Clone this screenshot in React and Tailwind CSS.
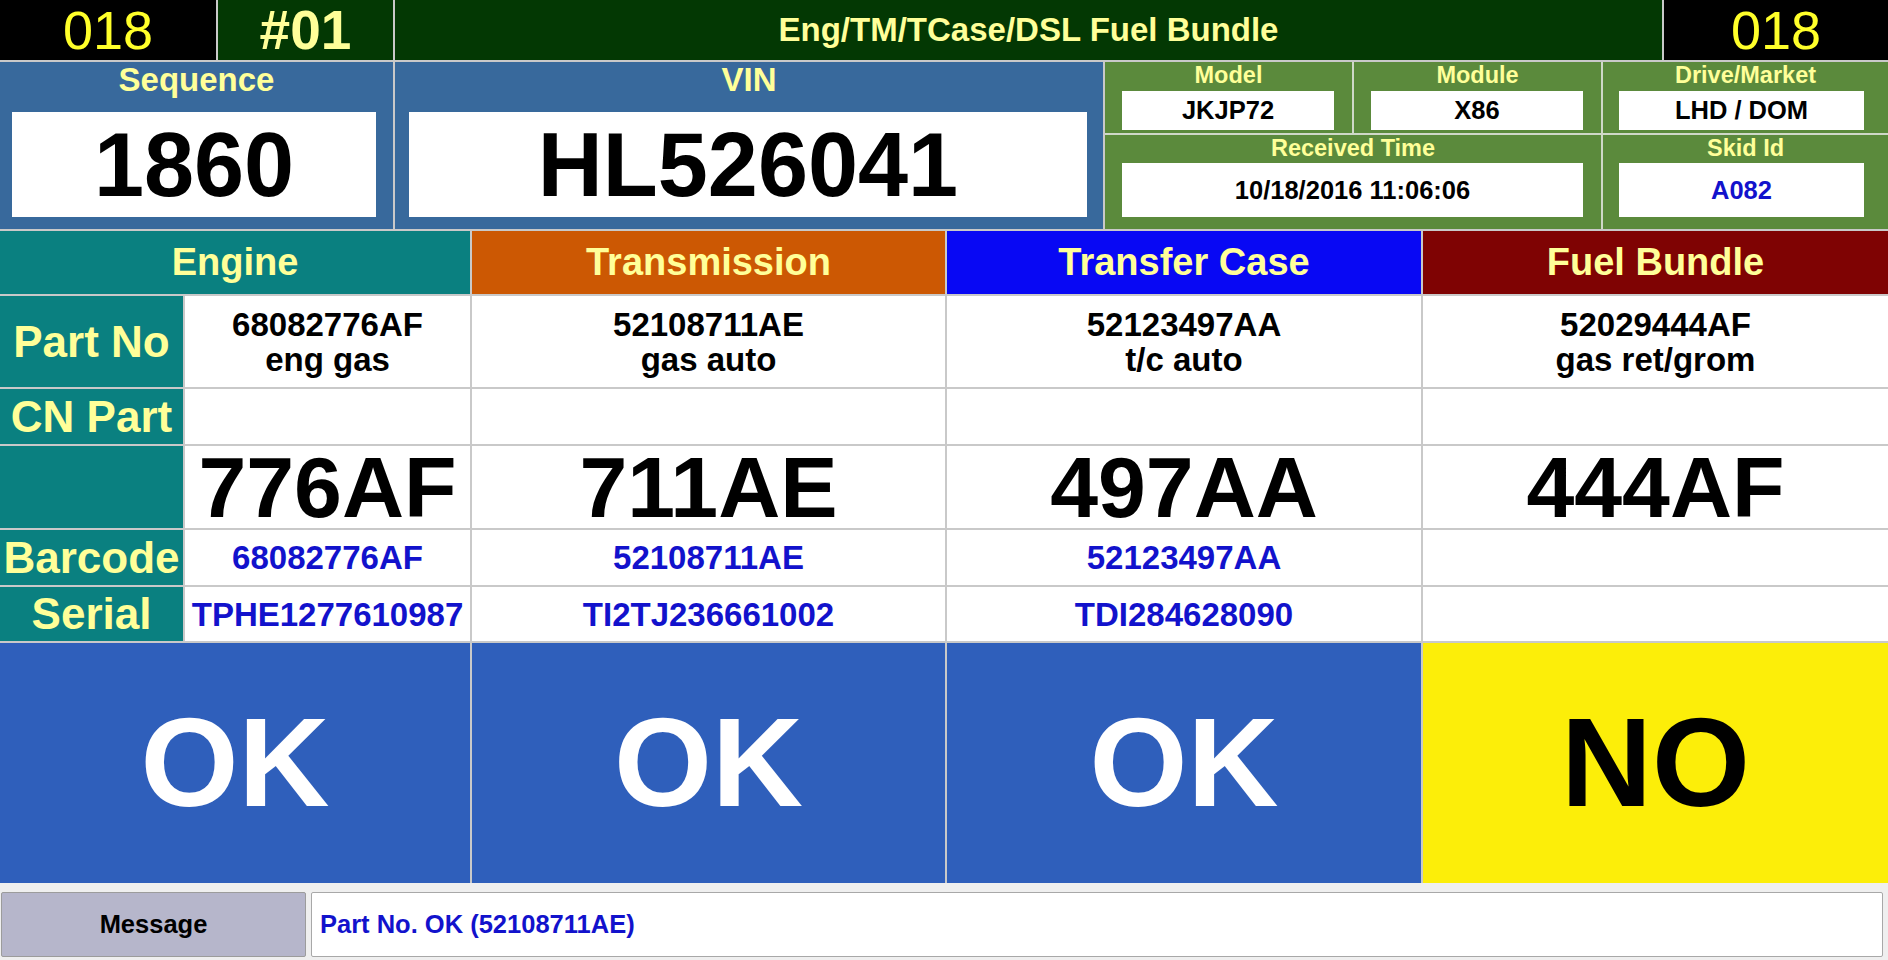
export default function App() {
  const cols = [
    { name: "Transmission", bg: "bg-[#cc5803]", part: "52108711AE", desc: "gas auto", big: "711AE", bar: "52108711AE", ser: "TI2TJ236661002", ok: true },
    { name: "Transfer Case", bg: "bg-[#0808f4]", part: "52123497AA", desc: "t/c auto", big: "497AA", bar: "52123497AA", ser: "TDI284628090", ok: true },
    { name: "Fuel Bundle", bg: "bg-[#7f0303]", part: "52029444AF", desc: "gas ret/grom", big: "444AF", bar: "", ser: "", ok: false },
  ];
  const hdr = "flex items-center justify-center text-[38px] font-bold text-[#ffff99]";
  const lbl = "bg-[#0a8080] flex items-center justify-center text-[44px] font-bold text-[#ffff99] whitespace-nowrap";
  const cell = "bg-white flex items-center justify-center";
  const partTxt = "text-[33px] font-bold leading-[35px] text-black whitespace-nowrap";
  const bigTxt = "text-[86px] font-bold leading-none text-black";
  const blueTxt = "text-[33px] font-bold leading-none text-[#1212cc] whitespace-nowrap";
  const okTxt = "text-[126px] font-bold leading-none";
  const gLabel = "flex items-center justify-center text-[23.5px] font-bold text-[#ffff99]";
  const gBox = "bg-white flex items-center justify-center text-[25.5px] font-bold";

  return (
    <div className="w-[1888px] h-[960px] flex flex-col bg-[#efefef] font-['Liberation_Sans',Arial,sans-serif] overflow-hidden">
      <div className="h-[883px] flex flex-col gap-[2px] bg-[#c9c9c9]">
        {/* Row 1 */}
        <div className="h-[60px] grid grid-cols-[216px_175px_1fr_224px] gap-[2px]">
          <div className="bg-black flex items-center justify-center text-[54px] leading-none text-[#ffff2a]">018</div>
          <div className="bg-[#033803] flex items-center justify-center text-[55px] font-bold leading-none text-[#ffff99]">#01</div>
          <div className="bg-[#033803] flex items-center justify-center text-[33px] font-bold text-[#ffff99]">Eng/TM/TCase/DSL Fuel Bundle</div>
          <div className="bg-black flex items-center justify-center text-[54px] leading-none text-[#ffff2a]">018</div>
        </div>

        {/* Row 2 */}
        <div className="h-[167px] grid grid-cols-[393px_708px_1fr] gap-[2px]">
          <div className="bg-[#38699c] flex flex-col">
            <div className="h-[36px] flex items-center justify-center text-[33px] font-bold text-[#ffff99]">Sequence</div>
            <div className="mt-[14px] ml-[12px] mr-[17px] h-[105px] bg-white flex items-center justify-center text-[90px] font-bold leading-none text-black">1860</div>
          </div>
          <div className="bg-[#38699c] flex flex-col">
            <div className="h-[36px] flex items-center justify-center text-[33px] font-bold text-[#ffff99]">VIN</div>
            <div className="mt-[14px] ml-[14px] mr-[16px] h-[105px] bg-white flex items-center justify-center text-[90px] font-bold leading-none text-black">HL526041</div>
          </div>
          <div className="grid grid-cols-[247px_247px_1fr] grid-rows-[71px_1fr] gap-[2px] bg-[#cfd8c8]">
            <div className="bg-[#5b8a3c] flex flex-col">
              <div className={`h-[27px] ${gLabel}`}>Model</div>
              <div className={`mt-[2px] ml-[17px] w-[212px] h-[39px] ${gBox} text-black`}>JKJP72</div>
            </div>
            <div className="bg-[#5b8a3c] flex flex-col">
              <div className={`h-[27px] ${gLabel}`}>Module</div>
              <div className={`mt-[2px] ml-[17px] w-[212px] h-[39px] ${gBox} text-black`}>X86</div>
            </div>
            <div className="bg-[#5b8a3c] flex flex-col">
              <div className={`h-[27px] ${gLabel}`}>Drive/Market</div>
              <div className={`mt-[2px] ml-[16px] w-[245px] h-[39px] ${gBox} text-black`}>LHD / DOM</div>
            </div>
            <div className="col-span-2 bg-[#5b8a3c] flex flex-col">
              <div className={`h-[28px] ${gLabel}`}>Received Time</div>
              <div className={`ml-[17px] w-[461px] h-[54px] ${gBox} text-black`}>10/18/2016 11:06:06</div>
            </div>
            <div className="bg-[#5b8a3c] flex flex-col">
              <div className={`h-[28px] ${gLabel}`}>Skid Id</div>
              <div className={`ml-[16px] w-[245px] h-[54px] ${gBox} text-[#1212cc]`}>A082</div>
            </div>
          </div>
        </div>

        {/* Table */}
        <div className="flex-1 grid grid-cols-[183px_285px_473px_474px_1fr] grid-rows-[63px_91px_55px_82px_55px_54px_240px] gap-[2px]">
          <div className={`col-span-2 bg-[#0a8080] ${hdr}`}>Engine</div>
          {cols.map((c) => (
            <div key={c.name} className={`${c.bg} ${hdr}`}>{c.name}</div>
          ))}

          <div className={lbl}>Part No</div>
          <div className={`${cell} flex-col`}>
            <div className={partTxt}>68082776AF</div>
            <div className={partTxt}>eng gas</div>
          </div>
          {cols.map((c) => (
            <div key={c.name} className={`${cell} flex-col`}>
              <div className={partTxt}>{c.part}</div>
              <div className={partTxt}>{c.desc}</div>
            </div>
          ))}

          <div className={lbl}>CN Part</div>
          <div className={cell}></div>
          {cols.map((c) => (
            <div key={c.name} className={cell}></div>
          ))}

          <div className="bg-[#0a8080]"></div>
          <div className={cell}><span className={bigTxt}>776AF</span></div>
          {cols.map((c) => (
            <div key={c.name} className={cell}><span className={bigTxt}>{c.big}</span></div>
          ))}

          <div className={lbl}>Barcode</div>
          <div className={cell}><span className={blueTxt}>68082776AF</span></div>
          {cols.map((c) => (
            <div key={c.name} className={cell}><span className={blueTxt}>{c.bar}</span></div>
          ))}

          <div className={lbl}>Serial</div>
          <div className={cell}><span className={blueTxt}>TPHE1277610987</span></div>
          {cols.map((c) => (
            <div key={c.name} className={cell}><span className={blueTxt}>{c.ser}</span></div>
          ))}

          <div className="col-span-2 bg-[#2f5fbb] flex items-center justify-center">
            <span className={`${okTxt} text-white`}>OK</span>
          </div>
          {cols.map((c) => (
            <div key={c.name} className={`${c.ok ? "bg-[#2f5fbb]" : "bg-[#fcee09]"} flex items-center justify-center`}>
              <span className={`${okTxt} ${c.ok ? "text-white" : "text-black"}`}>{c.ok ? "OK" : "NO"}</span>
            </div>
          ))}
        </div>
      </div>

      {/* Message */}
      <div className="h-[77px] flex gap-[5px] pl-[1px] pr-[5px] pt-[9px] pb-[3px]">
        <div className="w-[305px] bg-[#b6b6cb] border border-[#9c9c9c] rounded-[2px] flex items-center justify-center text-[25.5px] font-bold text-black">Message</div>
        <div className="flex-1 bg-white border border-[#a8a8a8] rounded-[2px] flex items-center pl-[8px] text-[25.5px] font-bold text-[#1212cc]">Part No. OK (52108711AE)</div>
      </div>
    </div>
  );
}
